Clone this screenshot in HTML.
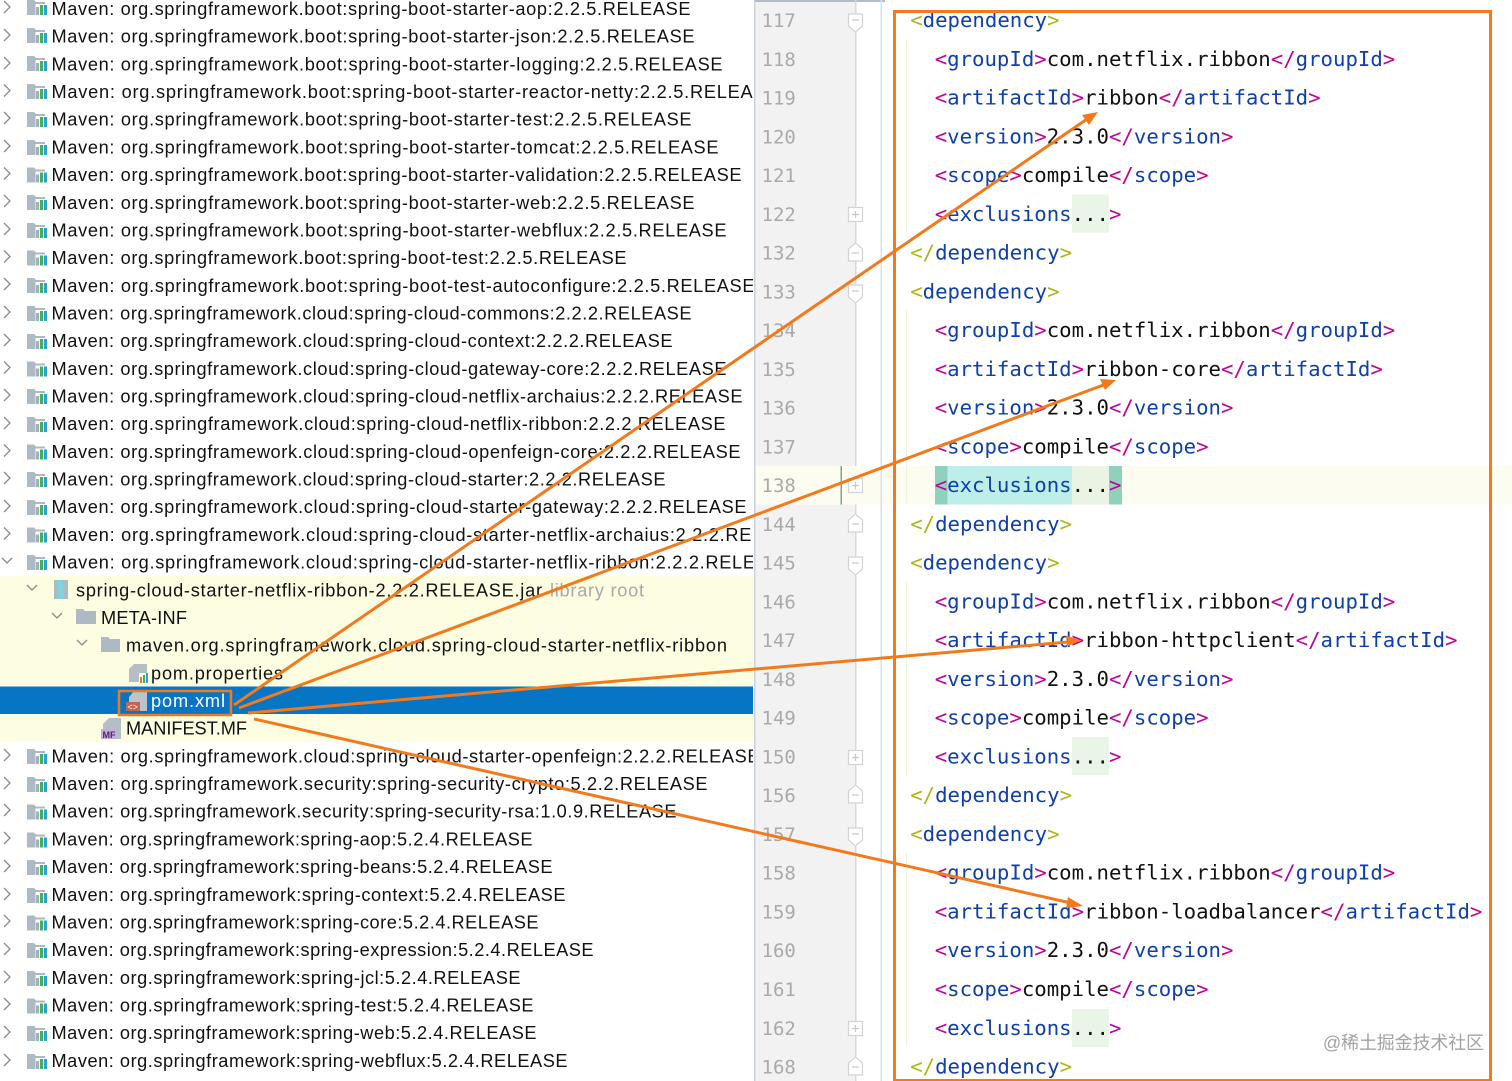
<!DOCTYPE html>
<html><head><meta charset="utf-8"><style>
html,body{margin:0;padding:0;background:#fff;overflow:hidden}
svg{display:block}
.t{font-family:"Liberation Sans",sans-serif;font-size:18.2px;fill:#111}
.c{font-family:"DejaVu Sans Mono","Liberation Mono",monospace;font-size:20.68px;fill:#111}
.n{font-family:"DejaVu Sans Mono","Liberation Mono",monospace;font-size:19px;fill:#aaa}
.o{fill:#a9b814}.m{fill:#c2009c}.b{fill:#0f3fa8}
</style></head><body>
<svg xmlns="http://www.w3.org/2000/svg" width="1512" height="1081" viewBox="0 0 1512 1081">
<defs>
<g id="mv"><path d="M27-7h7l2 2h9v13H27z" fill="#aebac3"/><rect x="35.500" y="-3" width="12.500" height="12" fill="#fff"/><rect x="36" y="0" width="3" height="8" fill="#9fb2b8"/><rect x="40" y="-2" width="3" height="10" fill="#45ad5c"/><rect x="44" y="-2" width="3" height="10" fill="#27a3d6"/></g>
<path id="r" d="M4-6l6 6-6 6" fill="none" stroke="#8a8a8a" stroke-width="1.300"/>
<g id="fo" fill="#fff" stroke="#d4d4d4" stroke-width="1.200"><path d="M848.500-7h14v12l-7 6-7-6z"/><path d="M852-1h7" stroke="#c8c8c8"/></g>
<g id="fc" fill="#fff" stroke="#d4d4d4" stroke-width="1.200"><path d="M848.500 8h14V-4l-7-6-7 6z"/><path d="M852 0h7" stroke="#c8c8c8"/></g>
<g id="fp" fill="#fff" stroke="#d4d4d4" stroke-width="1.200"><rect x="848.500" y="-7" width="14" height="14"/><path d="M852 0h7M855.500-3.500v7" stroke="#c8c8c8"/></g>
</defs>
<rect x="0" y="576" width="754" height="166" fill="#fdfde2"/>
<rect x="0" y="686.500" width="754" height="27.500" fill="#0675c4"/>

<use href="#r" y="7"/><use href="#mv" y="7"/><use href="#r" y="35"/><use href="#mv" y="35"/><use href="#r" y="63"/><use href="#mv" y="63"/><use href="#r" y="90.500"/><use href="#mv" y="91"/><use href="#r" y="118"/><use href="#mv" y="119"/><use href="#r" y="146"/><use href="#mv" y="147"/><use href="#r" y="173.500"/><use href="#mv" y="174.500"/><use href="#r" y="201"/><use href="#mv" y="202"/><use href="#r" y="229"/><use href="#mv" y="230"/><use href="#r" y="256.500"/><use href="#mv" y="257.500"/><use href="#r" y="284"/><use href="#mv" y="285"/><use href="#r" y="312"/><use href="#mv" y="313"/><use href="#r" y="340"/><use href="#mv" y="341"/><use href="#r" y="367.500"/><use href="#mv" y="368.500"/><use href="#r" y="395"/><use href="#mv" y="396"/><use href="#r" y="423"/><use href="#mv" y="424"/><use href="#r" y="450.500"/><use href="#mv" y="451.500"/><use href="#r" y="478"/><use href="#mv" y="479"/><use href="#r" y="506"/><use href="#mv" y="507"/><use href="#r" y="533.500"/><use href="#mv" y="534.500"/>
<path d="M2 558l5 5 5-5M27 585l5 5 5-5M52 613l5 5 5-5M77 640l5 5 5-5" fill="none" stroke="#8a8a8a" stroke-width="1.300"/>
<use href="#mv" y="562"/>
<use href="#r" y="755"/><use href="#mv" y="756"/><use href="#r" y="783"/><use href="#mv" y="784"/><use href="#r" y="810"/><use href="#mv" y="811.500"/><use href="#r" y="838"/><use href="#mv" y="839.500"/><use href="#r" y="866"/><use href="#mv" y="867"/><use href="#r" y="894"/><use href="#mv" y="895"/><use href="#r" y="921"/><use href="#mv" y="922.500"/><use href="#r" y="949"/><use href="#mv" y="950"/><use href="#r" y="977"/><use href="#mv" y="978"/><use href="#r" y="1004"/><use href="#mv" y="1005.500"/><use href="#r" y="1032"/><use href="#mv" y="1033"/><use href="#r" y="1060"/><use href="#mv" y="1061"/>

<rect x="54" y="580" width="14" height="19" fill="#aebac3"/><rect x="58" y="580" width="5" height="19" fill="#7fd3dc"/>
<path d="M76 609h7l2 2h11v13H76zM101 637h7l2 2h10v13h-19z" fill="#aebac3"/>
<path d="M134 664h13v18h-18v-13z" fill="#b4bec5"/><rect x="139" y="673" width="9" height="10" fill="#fdfde2"/><rect x="140" y="677" width="2" height="6" fill="#ec7a25"/><rect x="143" y="675" width="2" height="8" fill="#45ad5c"/><rect x="146" y="673" width="2" height="10" fill="#27a3d6"/>
<path d="M134 691h13v20h-18v-14z" fill="#b9c4cb"/><rect x="126" y="702" width="14" height="9" fill="#c9614f"/><text x="127.500" y="710" font-family="Liberation Sans,sans-serif" font-size="9" fill="#fff">&lt;&gt;</text>
<path d="M109 718h12v21h-18v-15z" fill="#b4bec5"/><rect x="101" y="729" width="14" height="10" fill="#c9a9e4"/><text x="102.500" y="738" font-family="Liberation Sans,sans-serif" font-size="9" font-weight="bold" fill="#44305c">MF</text>

<g class="t" transform="translate(-0.5 0)">
<text x="52" y="15" textLength="639">Maven: org.springframework.boot:spring-boot-starter-aop:2.2.5.RELEASE</text>
<text x="52" y="42.700" textLength="643">Maven: org.springframework.boot:spring-boot-starter-json:2.2.5.RELEASE</text>
<text x="52" y="70.400" textLength="671">Maven: org.springframework.boot:spring-boot-starter-logging:2.2.5.RELEASE</text>
<text x="52" y="98" textLength="727">Maven: org.springframework.boot:spring-boot-starter-reactor-netty:2.2.5.RELEASE</text>
<text x="52" y="125.700" textLength="640">Maven: org.springframework.boot:spring-boot-starter-test:2.2.5.RELEASE</text>
<text x="52" y="153.400" textLength="667">Maven: org.springframework.boot:spring-boot-starter-tomcat:2.2.5.RELEASE</text>
<text x="52" y="181.100" textLength="690">Maven: org.springframework.boot:spring-boot-starter-validation:2.2.5.RELEASE</text>
<text x="52" y="208.800" textLength="643">Maven: org.springframework.boot:spring-boot-starter-web:2.2.5.RELEASE</text>
<text x="52" y="236.400" textLength="675">Maven: org.springframework.boot:spring-boot-starter-webflux:2.2.5.RELEASE</text>
<text x="52" y="264.100" textLength="575">Maven: org.springframework.boot:spring-boot-test:2.2.5.RELEASE</text>
<text x="52" y="291.800" textLength="703">Maven: org.springframework.boot:spring-boot-test-autoconfigure:2.2.5.RELEASE</text>
<text x="52" y="319.500" textLength="640">Maven: org.springframework.cloud:spring-cloud-commons:2.2.2.RELEASE</text>
<text x="52" y="347.200" textLength="621">Maven: org.springframework.cloud:spring-cloud-context:2.2.2.RELEASE</text>
<text x="52" y="374.800" textLength="675">Maven: org.springframework.cloud:spring-cloud-gateway-core:2.2.2.RELEASE</text>
<text x="52" y="402.500" textLength="691">Maven: org.springframework.cloud:spring-cloud-netflix-archaius:2.2.2.RELEASE</text>
<text x="52" y="430.200" textLength="674">Maven: org.springframework.cloud:spring-cloud-netflix-ribbon:2.2.2.RELEASE</text>
<text x="52" y="457.900" textLength="689">Maven: org.springframework.cloud:spring-cloud-openfeign-core:2.2.2.RELEASE</text>
<text x="52" y="485.600" textLength="614">Maven: org.springframework.cloud:spring-cloud-starter:2.2.2.RELEASE</text>
<text x="52" y="513.200" textLength="695">Maven: org.springframework.cloud:spring-cloud-starter-gateway:2.2.2.RELEASE</text>
<text x="52" y="540.900" textLength="762">Maven: org.springframework.cloud:spring-cloud-starter-netflix-archaius:2.2.2.RELEASE</text>
<text x="52" y="568.600" textLength="742">Maven: org.springframework.cloud:spring-cloud-starter-netflix-ribbon:2.2.2.RELEASE</text>
<text x="76.500" y="596.300" textLength="466">spring-cloud-starter-netflix-ribbon-2.2.2.RELEASE.jar</text>
<text x="550.500" y="596.300" textLength="94" style="fill:#a8a8a8">library root</text>
<text x="101.500" y="624" textLength="86">META-INF</text>
<text x="126.500" y="651.600" textLength="601">maven.org.springframework.cloud.spring-cloud-starter-netflix-ribbon</text>
<text x="151.500" y="679.300" textLength="132">pom.properties</text>
<text x="151.500" y="707" textLength="74" style="fill:#fff">pom.xml</text>
<text x="126.500" y="734.700" textLength="121">MANIFEST.MF</text>
<text x="52" y="762.400" textLength="708">Maven: org.springframework.cloud:spring-cloud-starter-openfeign:2.2.2.RELEASE</text>
<text x="52" y="790" textLength="656">Maven: org.springframework.security:spring-security-crypto:5.2.2.RELEASE</text>
<text x="52" y="817.700" textLength="625">Maven: org.springframework.security:spring-security-rsa:1.0.9.RELEASE</text>
<text x="52" y="845.400" textLength="481">Maven: org.springframework:spring-aop:5.2.4.RELEASE</text>
<text x="52" y="873.100" textLength="501">Maven: org.springframework:spring-beans:5.2.4.RELEASE</text>
<text x="52" y="900.800" textLength="514">Maven: org.springframework:spring-context:5.2.4.RELEASE</text>
<text x="52" y="928.400" textLength="487">Maven: org.springframework:spring-core:5.2.4.RELEASE</text>
<text x="52" y="956.100" textLength="542">Maven: org.springframework:spring-expression:5.2.4.RELEASE</text>
<text x="52" y="983.800" textLength="469">Maven: org.springframework:spring-jcl:5.2.4.RELEASE</text>
<text x="52" y="1011.500" textLength="482">Maven: org.springframework:spring-test:5.2.4.RELEASE</text>
<text x="52" y="1039.200" textLength="485">Maven: org.springframework:spring-web:5.2.4.RELEASE</text>
<text x="52" y="1066.800" textLength="516">Maven: org.springframework:spring-webflux:5.2.4.RELEASE</text>
</g>

<rect x="753" y="0" width="759" height="1081" fill="#fff"/>
<rect x="754" y="0" width="101" height="1081" fill="#f2f2f2"/>
<rect x="754" y="0" width="1.500" height="1081" fill="#ccd3de"/>
<rect x="755" y="0" width="130" height="2" fill="#b3bbc9"/>
<rect x="855" y="0" width="1.500" height="1081" fill="#d9d9d9"/>
<rect x="756" y="466" width="756" height="38.500" fill="#fdfcf0"/>
<rect x="880.500" y="0" width="1.500" height="1081" fill="#d6e1ef"/>
<rect x="840.500" y="466" width="1.500" height="38.500" fill="#7aa888"/>
<path d="M906.500 39v193M906.500 310v193M906.500 582v193M906.500 853v193" stroke="#f1f2da" stroke-width="1.200"/>
<rect x="935" y="466" width="187" height="38.500" fill="#bdeeea"/>
<rect x="935" y="466" width="12.500" height="38.500" fill="#8fd1bd"/>
<rect x="1072" y="466" width="37" height="38.500" fill="#e9f4e4"/>
<rect x="1109" y="466" width="13" height="38.500" fill="#8fd1bd"/>
<rect x="1072" y="194.500" width="37" height="38" fill="#e9f5e6"/>
<rect x="1072" y="737" width="37" height="38" fill="#e9f5e6"/>
<rect x="1072" y="1009" width="37" height="38" fill="#e9f5e6"/>

<g class="n" transform="translate(-0.5 0)">
<text x="762" y="27">117</text><text x="762" y="65.800">118</text><text x="762" y="104.500">119</text><text x="762" y="143.300">120</text><text x="762" y="182">121</text><text x="762" y="220.800">122</text><text x="762" y="259.600">132</text><text x="762" y="298.300">133</text><text x="762" y="337.100">134</text><text x="762" y="375.800">135</text><text x="762" y="414.600">136</text><text x="762" y="453.400">137</text><text x="762" y="492.100">138</text><text x="762" y="530.900">144</text><text x="762" y="569.600">145</text><text x="762" y="608.400">146</text><text x="762" y="647.200">147</text><text x="762" y="685.900">148</text><text x="762" y="724.700">149</text><text x="762" y="763.400">150</text><text x="762" y="802.200">156</text><text x="762" y="841">157</text><text x="762" y="879.700">158</text><text x="762" y="918.500">159</text><text x="762" y="957.200">160</text><text x="762" y="996">161</text><text x="762" y="1034.800">162</text><text x="762" y="1073.500">168</text>
</g>
<use href="#fo" y="21"/><use href="#fp" y="214.500"/><use href="#fc" y="253"/><use href="#fo" y="292"/><use href="#fp" y="485.500"/><use href="#fc" y="524"/><use href="#fo" y="564"/><use href="#fp" y="757.500"/><use href="#fc" y="795"/><use href="#fo" y="835"/><use href="#fp" y="1028.500"/><use href="#fc" y="1067"/>

<g class="c" transform="translate(-0.8 0)">
<text x="911" y="27"><tspan class="o">&lt;</tspan><tspan class="b">dependency</tspan><tspan class="o">&gt;</tspan></text>
<text x="935.500" y="65.800"><tspan class="m">&lt;</tspan><tspan class="b">groupId</tspan><tspan class="m">&gt;</tspan>com.netflix.ribbon<tspan class="m">&lt;/</tspan><tspan class="b">groupId</tspan><tspan class="m">&gt;</tspan></text>
<text x="935.500" y="104.500"><tspan class="m">&lt;</tspan><tspan class="b">artifactId</tspan><tspan class="m">&gt;</tspan>ribbon<tspan class="m">&lt;/</tspan><tspan class="b">artifactId</tspan><tspan class="m">&gt;</tspan></text>
<text x="935.500" y="143.300"><tspan class="m">&lt;</tspan><tspan class="b">version</tspan><tspan class="m">&gt;</tspan>2.3.0<tspan class="m">&lt;/</tspan><tspan class="b">version</tspan><tspan class="m">&gt;</tspan></text>
<text x="935.500" y="182"><tspan class="m">&lt;</tspan><tspan class="b">scope</tspan><tspan class="m">&gt;</tspan>compile<tspan class="m">&lt;/</tspan><tspan class="b">scope</tspan><tspan class="m">&gt;</tspan></text>
<text x="935.500" y="220.800"><tspan class="m">&lt;</tspan><tspan class="b">exclusions</tspan>...<tspan class="m">&gt;</tspan></text>
<text x="911" y="259.600"><tspan class="o">&lt;/</tspan><tspan class="b">dependency</tspan><tspan class="o">&gt;</tspan></text>
<text x="911" y="298.300"><tspan class="o">&lt;</tspan><tspan class="b">dependency</tspan><tspan class="o">&gt;</tspan></text>
<text x="935.500" y="337.100"><tspan class="m">&lt;</tspan><tspan class="b">groupId</tspan><tspan class="m">&gt;</tspan>com.netflix.ribbon<tspan class="m">&lt;/</tspan><tspan class="b">groupId</tspan><tspan class="m">&gt;</tspan></text>
<text x="935.500" y="375.800"><tspan class="m">&lt;</tspan><tspan class="b">artifactId</tspan><tspan class="m">&gt;</tspan>ribbon-core<tspan class="m">&lt;/</tspan><tspan class="b">artifactId</tspan><tspan class="m">&gt;</tspan></text>
<text x="935.500" y="414.600"><tspan class="m">&lt;</tspan><tspan class="b">version</tspan><tspan class="m">&gt;</tspan>2.3.0<tspan class="m">&lt;/</tspan><tspan class="b">version</tspan><tspan class="m">&gt;</tspan></text>
<text x="935.500" y="453.400"><tspan class="m">&lt;</tspan><tspan class="b">scope</tspan><tspan class="m">&gt;</tspan>compile<tspan class="m">&lt;/</tspan><tspan class="b">scope</tspan><tspan class="m">&gt;</tspan></text>
<text x="935.500" y="492.100"><tspan class="m">&lt;</tspan><tspan class="b">exclusions</tspan>...<tspan class="m">&gt;</tspan></text>
<text x="911" y="530.900"><tspan class="o">&lt;/</tspan><tspan class="b">dependency</tspan><tspan class="o">&gt;</tspan></text>
<text x="911" y="569.600"><tspan class="o">&lt;</tspan><tspan class="b">dependency</tspan><tspan class="o">&gt;</tspan></text>
<text x="935.500" y="608.400"><tspan class="m">&lt;</tspan><tspan class="b">groupId</tspan><tspan class="m">&gt;</tspan>com.netflix.ribbon<tspan class="m">&lt;/</tspan><tspan class="b">groupId</tspan><tspan class="m">&gt;</tspan></text>
<text x="935.500" y="647.200"><tspan class="m">&lt;</tspan><tspan class="b">artifactId</tspan><tspan class="m">&gt;</tspan>ribbon-httpclient<tspan class="m">&lt;/</tspan><tspan class="b">artifactId</tspan><tspan class="m">&gt;</tspan></text>
<text x="935.500" y="685.900"><tspan class="m">&lt;</tspan><tspan class="b">version</tspan><tspan class="m">&gt;</tspan>2.3.0<tspan class="m">&lt;/</tspan><tspan class="b">version</tspan><tspan class="m">&gt;</tspan></text>
<text x="935.500" y="724.700"><tspan class="m">&lt;</tspan><tspan class="b">scope</tspan><tspan class="m">&gt;</tspan>compile<tspan class="m">&lt;/</tspan><tspan class="b">scope</tspan><tspan class="m">&gt;</tspan></text>
<text x="935.500" y="763.400"><tspan class="m">&lt;</tspan><tspan class="b">exclusions</tspan>...<tspan class="m">&gt;</tspan></text>
<text x="911" y="802.200"><tspan class="o">&lt;/</tspan><tspan class="b">dependency</tspan><tspan class="o">&gt;</tspan></text>
<text x="911" y="841"><tspan class="o">&lt;</tspan><tspan class="b">dependency</tspan><tspan class="o">&gt;</tspan></text>
<text x="935.500" y="879.700"><tspan class="m">&lt;</tspan><tspan class="b">groupId</tspan><tspan class="m">&gt;</tspan>com.netflix.ribbon<tspan class="m">&lt;/</tspan><tspan class="b">groupId</tspan><tspan class="m">&gt;</tspan></text>
<text x="935.500" y="918.500"><tspan class="m">&lt;</tspan><tspan class="b">artifactId</tspan><tspan class="m">&gt;</tspan>ribbon-loadbalancer<tspan class="m">&lt;/</tspan><tspan class="b">artifactId</tspan><tspan class="m">&gt;</tspan></text>
<text x="935.500" y="957.200"><tspan class="m">&lt;</tspan><tspan class="b">version</tspan><tspan class="m">&gt;</tspan>2.3.0<tspan class="m">&lt;/</tspan><tspan class="b">version</tspan><tspan class="m">&gt;</tspan></text>
<text x="935.500" y="996"><tspan class="m">&lt;</tspan><tspan class="b">scope</tspan><tspan class="m">&gt;</tspan>compile<tspan class="m">&lt;/</tspan><tspan class="b">scope</tspan><tspan class="m">&gt;</tspan></text>
<text x="935.500" y="1034.800"><tspan class="m">&lt;</tspan><tspan class="b">exclusions</tspan>...<tspan class="m">&gt;</tspan></text>
<text x="911" y="1073.500"><tspan class="o">&lt;/</tspan><tspan class="b">dependency</tspan><tspan class="o">&gt;</tspan></text>
</g>

<text x="1323" y="1049" textLength="161" font-family="'Liberation Sans','Noto Sans CJK SC',sans-serif" font-size="18" fill="#a3a3a3">@稀土掘金技术社区</text>

<g fill="none" stroke="#f37a1c">
<rect x="894.500" y="11.500" width="596" height="1069" stroke-width="3"/>
<rect x="119" y="691" width="112" height="24" stroke-width="2.500"/>
<path d="M234 705L1090 117M239 708L1106 384M248 713L1068 642M254 719L1071 903" stroke-width="3"/>
</g>
<g fill="#f37a1c">
<path d="M1098 112l-16 3 7 10z"/>
<path d="M1116 380l-16-1 5 11z"/>
<path d="M1081 640.500l-15-5 1 11z"/>
<path d="M1083 906l-15-9-2 11z"/>
</g>
</svg>
</body></html>
